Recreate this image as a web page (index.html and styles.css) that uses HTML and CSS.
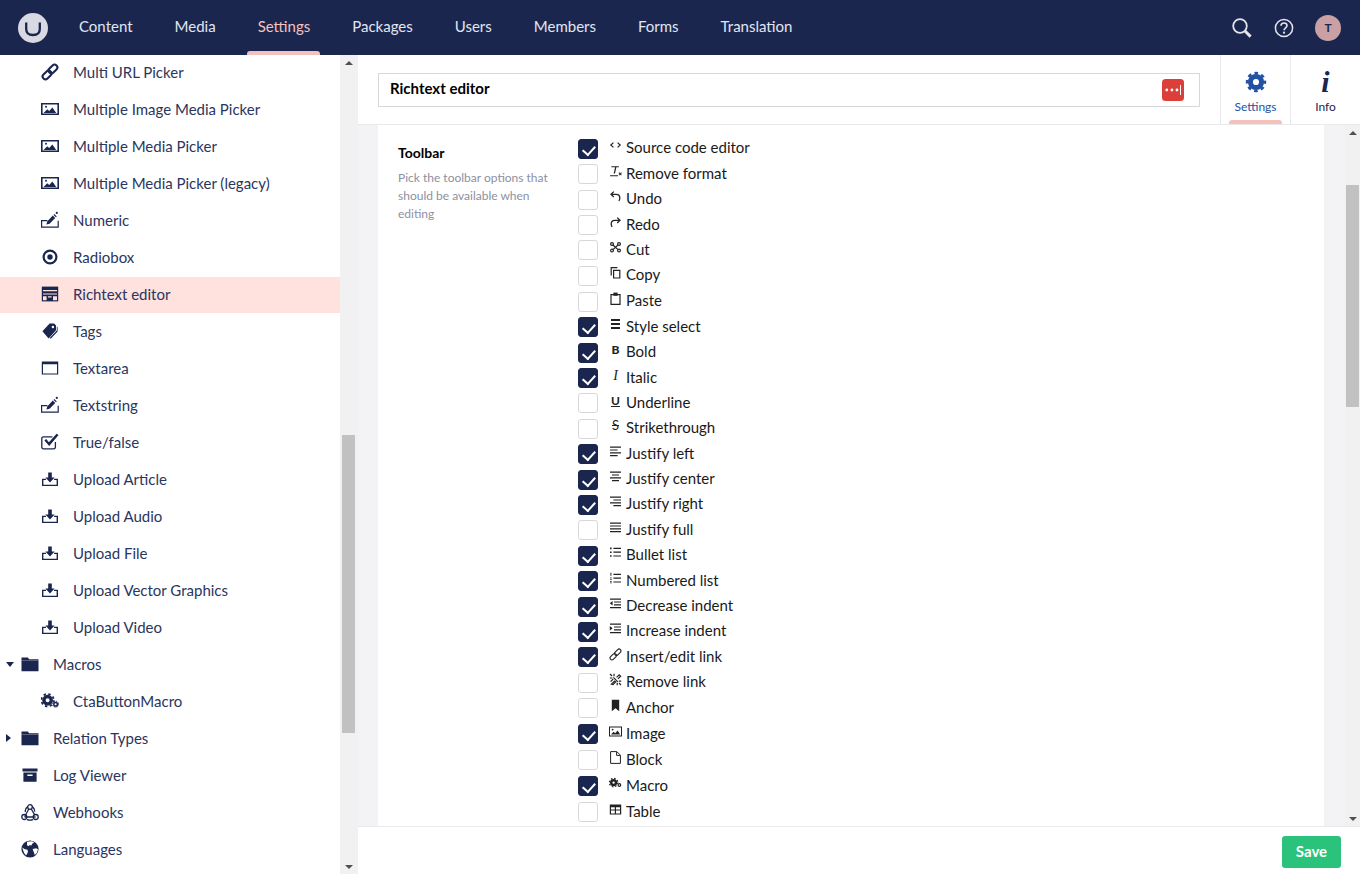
FILE: index.html
```html
<!DOCTYPE html>
<html lang="en">
<head>
  <meta charset="UTF-8" />
  <meta name="viewport" content="width=device-width, initial-scale=1" />
  <title>Richtext editor</title>
  <link rel="stylesheet" href="styles.css">
</head>
<body>

<svg class="sprites" aria-hidden="true">
  <symbol id="i-link" viewBox="0 0 18 18"><g fill="none" stroke="currentColor" stroke-width="2.1" transform="rotate(-45 9 9)"><rect x="-.2" y="6.2" width="10" height="5.6" rx="2.8"/><rect x="8.2" y="6.2" width="10" height="5.6" rx="2.8"/></g></symbol>
  <symbol id="i-image" viewBox="0 0 18 18"><path fill="currentColor" fill-rule="evenodd" d="M0 3h18v12H0zM1.6 4.5v9h14.8v-9z"/><path fill="currentColor" d="M2.6 13l3.6-3.8 2 1.8 3.2-3.6 3.8 5.6z"/><circle cx="5" cy="6.7" r="1" fill="currentColor"/></symbol>
  <symbol id="i-edit" viewBox="0 0 18 18"><path fill="none" stroke="currentColor" stroke-width="1.2" d="M6.4 9.6H.6v6.6h16.6V9.8"/><path fill="currentColor" d="M5.4 13.6l.8-3.2 5.6-5.8 2.4 2.4-5.6 5.8zM12.5 3.9l.9-.9 2.4 2.4-.9.9z"/><circle cx="15.8" cy="1.9" r="1.1" fill="currentColor"/></symbol>
  <symbol id="i-radio" viewBox="0 0 18 18"><circle cx="9" cy="9" r="6.4" fill="none" stroke="currentColor" stroke-width="2.2"/><circle cx="9" cy="9" r="2.7" fill="currentColor"/></symbol>
  <symbol id="i-rte" viewBox="0 0 18 18"><path fill="currentColor" d="M.8 1.6h16.4v14.8H.8z"/><path fill="#ffe1de" d="M2 5h14v1.2H2zM2 8.4h14v1.1H2zM2 11.2h3.6v4H2zM7 11.2h3.6v1.3H7zM12 11.2h4v4h-4z"/></symbol>
  <symbol id="i-tags" viewBox="0 0 18 18"><path fill="currentColor" fill-rule="evenodd" d="M1.4 9.2L8.6 1.6h4.6L15 3.4v4.8L7.6 16.4zM11.9 3.8a1.2 1.2 0 1 0 0 2.4 1.2 1.2 0 0 0 0-2.4z"/><path fill="currentColor" d="M15.8 4.4l.8.8v4.2l-6.8 7.4-1.1-.8 7.1-7.4z"/></symbol>
  <symbol id="i-window" viewBox="0 0 18 18"><path fill="currentColor" fill-rule="evenodd" d="M.8 2.4h16.4v13.2H.8zM2 5.2v9.2h14V5.2z"/></symbol>
  <symbol id="i-true" viewBox="0 0 18 18"><path fill="none" stroke="currentColor" stroke-width="1.3" d="M14.4 9v5.2a1.6 1.6 0 0 1-1.6 1.6H2.4A1.6 1.6 0 0 1 .8 14.2V5.4a1.6 1.6 0 0 1 1.6-1.6h9"/><path fill="currentColor" d="M3.4 7.6L5.2 6l2.7 3.2L15.6.7l2 1.2-9.4 11z"/></symbol>
  <symbol id="i-upload" viewBox="0 0 18 18"><path fill="none" stroke="currentColor" stroke-width="1.4" d="M5 9.4H1.7v6h14.6v-6H13"/><path fill="currentColor" d="M7.2 2.6h3.6v5h2.8L9 12.4 4.4 7.6h2.8z"/></symbol>
  <symbol id="i-folder" viewBox="0 0 18 18"><path fill="currentColor" d="M.5 2.6h6.4l1.2 1.6h9.4v12H.5z"/><path fill="#fff" opacity=".7" d="M.5 5h17v.4H.5z"/></symbol>
  <symbol id="i-gears" viewBox="0 0 18 18"><circle cx="6.6" cy="8.2" r="3.7" fill="none" stroke="currentColor" stroke-width="3.4"/><circle cx="6.6" cy="8.2" r="6.2" fill="none" stroke="currentColor" stroke-width="1.8" stroke-dasharray="2.4 2.47"/><circle cx="14.6" cy="12.2" r="1.8" fill="none" stroke="currentColor" stroke-width="1.5"/><circle cx="14.6" cy="12.2" r="3" fill="none" stroke="currentColor" stroke-width="1" stroke-dasharray="1.3 1.05"/></symbol>
  <symbol id="i-box" viewBox="0 0 18 18"><path fill="currentColor" fill-rule="evenodd" d="M1.5 2.4h15v3.2h-15zM2.4 6.6h13.2v9.2H2.4zM6.4 8.4v1.6h5.2V8.4z"/></symbol>
  <symbol id="i-hooks" viewBox="0 0 18 18"><g fill="none" stroke="currentColor" stroke-width="1.3"><circle cx="9" cy="4" r="2.3"/><circle cx="3.3" cy="14" r="2.5"/><circle cx="14.7" cy="14" r="2.5"/><path d="M7.8 6L3.6 13.8M10.2 6l3.4 5.6M3.6 14h11M6.8 3.6C4.6 5 4 7 4.4 9M11.2 3.6c2 1.4 2.6 3 2.4 5M6 16.6c2 .7 4 .7 6 0"/></g></symbol>
  <symbol id="i-globe" viewBox="0 0 18 18"><circle cx="9" cy="9" r="8.6" fill="currentColor"/><path fill="#fff" d="M6 1.8l5-.6 2.2 1.4-2 1.2-.8 1.6-2-.4-.4 1.2-2-1zM11.6 9l3.6-.8 1.8 1-1 3.6-2.2 2.2-1-2.8zM1.2 7.6L3.4 9l3 .8.6 2-1.2 2.6-1 .8-1.8-2.4z"/></symbol>

  <symbol id="t-code" viewBox="0 0 13 13"><path fill="none" stroke="currentColor" stroke-width="1.2" d="M4.4 3.6L1.8 6l2.6 2.4M8.6 3.6L11.2 6 8.6 8.4"/></symbol>
  <symbol id="t-clear" viewBox="0 0 13 13"><path fill="currentColor" d="M2.4 1.2h7.4v1.1H7.4L6 8.4H4.7l1.4-6.1H2.4zM1 10.2h8v1.1H1zM9.6 8l.7-.7.9.9.9-.9.7.7-.9.9.9.9-.7.7-.9-.9-.9.9-.7-.7.9-.9z"/></symbol>
  <symbol id="t-undo" viewBox="0 0 13 13"><path fill="none" stroke="currentColor" stroke-width="1.3" d="M4.8 1.6L2 4.3l2.8 2.6M2.4 4.3h4.8c2.2 0 3.6 1.6 3.6 3.6 0 1.2-.4 2.2-1 3"/></symbol>
  <symbol id="t-redo" viewBox="0 0 13 13"><path fill="none" stroke="currentColor" stroke-width="1.3" d="M8.2 1.6L11 4.3 8.2 6.9M10.6 4.3H5.8C3.6 4.3 2.2 5.9 2.2 7.9c0 1.2.4 2.2 1 3"/></symbol>
  <symbol id="t-cut" viewBox="0 0 13 13"><g fill="none" stroke="currentColor" stroke-width="1.2"><circle cx="3" cy="3" r="1.4"/><circle cx="10" cy="3" r="1.4"/><circle cx="3" cy="9.6" r="1.4"/><circle cx="10" cy="9.6" r="1.4"/><path d="M4 4l5 4.6M9 4L4 8.6"/></g></symbol>
  <symbol id="t-copy" viewBox="0 0 13 13"><path fill="none" stroke="currentColor" stroke-width="1.2" d="M4.6 4.4h6.2v7.6H4.6zM2.2 9.4V1.6h6.2"/></symbol>
  <symbol id="t-paste" viewBox="0 0 13 13"><path fill="none" stroke="currentColor" stroke-width="1.2" d="M2 2.6h9v9.8H2z"/><path fill="currentColor" d="M4.4.6h4.2v3.2H4.4z"/></symbol>
  <symbol id="t-style" viewBox="0 0 13 13"><path fill="currentColor" d="M2 1h9v2H2zM2 5h9v2H2zM2 9h9v2H2z"/></symbol>
  <symbol id="t-left" viewBox="0 0 13 13"><path fill="currentColor" d="M1 1.6h11v1.2H1zM1 4.4h7.6v1.2H1zM1 7.2h11v1.2H1zM1 10h7.6v1.2H1z"/></symbol>
  <symbol id="t-center" viewBox="0 0 13 13"><path fill="currentColor" d="M1 1.6h11v1.2H1zM3 4.4h7v1.2H3zM1 7.2h11v1.2H1zM3 10h7v1.2H3z"/></symbol>
  <symbol id="t-right" viewBox="0 0 13 13"><path fill="currentColor" d="M1 1.6h11v1.2H1zM4.4 4.4H12v1.2H4.4zM1 7.2h11v1.2H1zM4.4 10H12v1.2H4.4z"/></symbol>
  <symbol id="t-full" viewBox="0 0 13 13"><path fill="currentColor" d="M1 1.6h11v1.2H1zM1 4.4h11v1.2H1zM1 7.2h11v1.2H1zM1 10h11v1.2H1z"/></symbol>
  <symbol id="t-bullet" viewBox="0 0 13 13"><path fill="currentColor" d="M1 1.6h1.6v1.6H1zM1 5.4h1.6V7H1zM1 9.2h1.6v1.6H1zM4.4 1.8H12V3H4.4zM4.4 5.6H12v1.2H4.4zM4.4 9.4H12v1.2H4.4z"/></symbol>
  <symbol id="t-number" viewBox="0 0 13 13"><path fill="currentColor" d="M1.4.8h1v3h-1zM1 5.4h1.8v.8H1zM1 7h1.8v.8H1zM1 9.2h1.8v.7H1zM1 10.6h1.8v.7H1zM4.4 1.8H12V3H4.4zM4.4 5.6H12v1.2H4.4zM4.4 9.4H12v1.2H4.4z"/></symbol>
  <symbol id="t-outdent" viewBox="0 0 13 13"><path fill="currentColor" d="M1 1.6h11v1.2H1zM5 4.4h7v1.2H5zM5 7.2h7v1.2H5zM1 10h11v1.2H1zM3.6 4v4.6L.8 6.3z"/></symbol>
  <symbol id="t-indent" viewBox="0 0 13 13"><path fill="currentColor" d="M1 1.6h11v1.2H1zM5 4.4h7v1.2H5zM5 7.2h7v1.2H5zM1 10h11v1.2H1zM.8 4v4.6l2.8-2.3z"/></symbol>
  <symbol id="t-link" viewBox="0 0 13 13"><g fill="none" stroke="currentColor" stroke-width="1.1" transform="rotate(-45 6.5 6.5)"><rect x="-.4" y="4.6" width="7.4" height="3.8" rx="1.9"/><rect x="6" y="4.6" width="7.4" height="3.8" rx="1.9"/></g></symbol>
  <symbol id="t-unlink" viewBox="0 0 13 13"><g fill="none" stroke="currentColor" stroke-width="1.2"><path d="M1.6 8.6l2.6-2.6M2.4 11.2l3.2-3.2 1 1-2.6 2.6zM4.4 4.4l4.4 4.4M7.6 4.4l2.6-2.6 1.4 1.4L9 5.8M1 1l2 2M5 .8v2.4M.8 5h2.4M12 12l-2-2M8.2 12.2V9.8M12.2 8.2H9.8"/></g></symbol>
  <symbol id="t-anchor" viewBox="0 0 13 13"><path fill="currentColor" d="M2.8.8h7.4v11.4L6.5 9.2l-3.7 3z"/></symbol>
  <symbol id="t-image" viewBox="0 0 13 13"><path fill="currentColor" fill-rule="evenodd" d="M0 1.6h13v9.8H0zM1 2.6v7.8h11V2.6z"/><path fill="currentColor" d="M2 9.6l2.6-2.8 1.6 1.4 2.4-2.8 2.6 4.2z"/><circle cx="3.6" cy="4.6" r=".9" fill="currentColor"/></symbol>
  <symbol id="t-block" viewBox="0 0 13 13"><path fill="none" stroke="currentColor" stroke-width="1" d="M1.6.6h6.2l3.6 3.6v8.2H1.6zM7.6.8v3.6h3.6"/></symbol>
  <symbol id="t-macro" viewBox="0 0 13 13"><circle cx="4.6" cy="5.6" r="2.4" fill="none" stroke="currentColor" stroke-width="2.4"/><circle cx="4.6" cy="5.6" r="4.2" fill="none" stroke="currentColor" stroke-width="1.2" stroke-dasharray="1.6 1.7"/><circle cx="10.4" cy="8" r="1.3" fill="none" stroke="currentColor" stroke-width="1.2"/></symbol>
  <symbol id="t-table" viewBox="0 0 13 13"><path fill="currentColor" fill-rule="evenodd" d="M.8 1.4h11.4v10.2H.8zM2 4.2v2.2h3.8V4.2zM7 4.2v2.2h4V4.2zM2 7.4v3h3.8v-3zM7 7.4v3h4v-3z"/></symbol>
</svg>

<header class="topbar">
  <div class="logo"><svg viewBox="0 0 30 30" width="30" height="30"><circle cx="15" cy="15" r="15" fill="#d8d9e2"/><path d="M8.2 9.6v6.4c0 4.6 2.4 6 6.8 6s6.8-1.4 6.8-6V9.6" fill="none" stroke="#1b264f" stroke-width="2.3"/></svg></div>
  <nav class="mainnav">
    <a class="nav-item">Content</a>
    <a class="nav-item">Media</a>
    <a class="nav-item active">Settings</a>
    <a class="nav-item">Packages</a>
    <a class="nav-item">Users</a>
    <a class="nav-item">Members</a>
    <a class="nav-item">Forms</a>
    <a class="nav-item">Translation</a>
  </nav>
  <div class="top-tools">
    <svg viewBox="0 0 22 22" width="22" height="22"><circle cx="9" cy="9" r="6.8" fill="none" stroke="#e4e4ea" stroke-width="1.8"/><path d="M14 14l5.6 5.6" stroke="#e4e4ea" stroke-width="3"/></svg>
    <svg viewBox="0 0 20 20" width="20" height="20"><circle cx="10" cy="10" r="8.6" fill="none" stroke="#e4e4ea" stroke-width="1.5"/><path d="M7 7.8c0-1.8 1.4-2.8 3-2.8s3 1 3 2.6c0 2.4-3 2.4-3 4.6" fill="none" stroke="#e4e4ea" stroke-width="1.6"/><circle cx="10" cy="14.7" r="1.1" fill="#e4e4ea"/></svg>
    <div class="avatar">T</div>
  </div>
</header>

<div class="main">
  <aside class="sidebar">
    <ul class="tree">
      <li class="tree-row child"><svg class="tree-icon"><use href="#i-link"/></svg>Multi URL Picker</li>
      <li class="tree-row child"><svg class="tree-icon"><use href="#i-image"/></svg>Multiple Image Media Picker</li>
      <li class="tree-row child"><svg class="tree-icon"><use href="#i-image"/></svg>Multiple Media Picker</li>
      <li class="tree-row child"><svg class="tree-icon"><use href="#i-image"/></svg>Multiple Media Picker (legacy)</li>
      <li class="tree-row child"><svg class="tree-icon"><use href="#i-edit"/></svg>Numeric</li>
      <li class="tree-row child"><svg class="tree-icon"><use href="#i-radio"/></svg>Radiobox</li>
      <li class="tree-row child current"><svg class="tree-icon"><use href="#i-rte"/></svg>Richtext editor</li>
      <li class="tree-row child"><svg class="tree-icon"><use href="#i-tags"/></svg>Tags</li>
      <li class="tree-row child"><svg class="tree-icon"><use href="#i-window"/></svg>Textarea</li>
      <li class="tree-row child"><svg class="tree-icon"><use href="#i-edit"/></svg>Textstring</li>
      <li class="tree-row child"><svg class="tree-icon"><use href="#i-true"/></svg>True/false</li>
      <li class="tree-row child"><svg class="tree-icon"><use href="#i-upload"/></svg>Upload Article</li>
      <li class="tree-row child"><svg class="tree-icon"><use href="#i-upload"/></svg>Upload Audio</li>
      <li class="tree-row child"><svg class="tree-icon"><use href="#i-upload"/></svg>Upload File</li>
      <li class="tree-row child"><svg class="tree-icon"><use href="#i-upload"/></svg>Upload Vector Graphics</li>
      <li class="tree-row child"><svg class="tree-icon"><use href="#i-upload"/></svg>Upload Video</li>
      <li class="tree-row"><span class="caret down"></span><svg class="tree-icon"><use href="#i-folder"/></svg>Macros</li>
      <li class="tree-row child"><svg class="tree-icon"><use href="#i-gears"/></svg>CtaButtonMacro</li>
      <li class="tree-row"><span class="caret right"></span><svg class="tree-icon"><use href="#i-folder"/></svg>Relation Types</li>
      <li class="tree-row"><span class="caret none"></span><svg class="tree-icon"><use href="#i-box"/></svg>Log Viewer</li>
      <li class="tree-row"><span class="caret none"></span><svg class="tree-icon"><use href="#i-hooks"/></svg>Webhooks</li>
      <li class="tree-row"><span class="caret none"></span><svg class="tree-icon"><use href="#i-globe"/></svg>Languages</li>
    </ul>
    <div class="scrollbar side-scroll">
      <span class="arrow up"></span>
      <span class="thumb"></span>
      <span class="arrow dn"></span>
    </div>
  </aside>

  <section class="editor">
    <div class="editor-head">
      <div class="name-field">
        <span class="name-text">Richtext editor</span>
        <svg class="lock" viewBox="0 0 22 22" width="22" height="22"><rect width="22" height="22" rx="3.5" fill="#dc3f39"/><g fill="#fff"><circle cx="4.8" cy="11" r="1.4"/><circle cx="9.9" cy="11" r="1.4"/><circle cx="15" cy="11" r="1.4"/><rect x="18" y="6" width="1" height="10"/></g></svg>
      </div>
      <div class="app-tab active">
        <svg viewBox="0 0 22 22" width="22" height="22"><circle cx="11" cy="11" r="5.6" fill="none" stroke="#2152a3" stroke-width="5"/><circle cx="11" cy="11" r="8.9" fill="none" stroke="#2152a3" stroke-width="2.6" stroke-dasharray="3.6 3.39" stroke-dashoffset="1.8"/></svg>
        <span>Settings</span>
      </div>
      <div class="app-tab">
        <span class="info-i">i</span>
        <span>Info</span>
      </div>
    </div>

    <div class="editor-body">
      <div class="card">
        <div class="prop-label">
          <h4>Toolbar</h4>
          <p>Pick the toolbar options that should be available when editing</p>
        </div>
        <ul class="opts">
          <li class="opt"><span class="cb on"></span><svg class="opt-icon"><use href="#t-code"/></svg>Source code editor</li>
          <li class="opt"><span class="cb"></span><svg class="opt-icon"><use href="#t-clear"/></svg>Remove format</li>
          <li class="opt"><span class="cb"></span><svg class="opt-icon"><use href="#t-undo"/></svg>Undo</li>
          <li class="opt"><span class="cb"></span><svg class="opt-icon"><use href="#t-redo"/></svg>Redo</li>
          <li class="opt"><span class="cb"></span><svg class="opt-icon"><use href="#t-cut"/></svg>Cut</li>
          <li class="opt"><span class="cb"></span><svg class="opt-icon"><use href="#t-copy"/></svg>Copy</li>
          <li class="opt tall"><span class="cb"></span><svg class="opt-icon"><use href="#t-paste"/></svg>Paste</li>
          <li class="opt"><span class="cb on"></span><svg class="opt-icon"><use href="#t-style"/></svg>Style select</li>
          <li class="opt"><span class="cb on"></span><span class="opt-glyph bold">B</span>Bold</li>
          <li class="opt"><span class="cb on"></span><span class="opt-glyph ital">I</span>Italic</li>
          <li class="opt"><span class="cb"></span><span class="opt-glyph under">U</span>Underline</li>
          <li class="opt"><span class="cb"></span><span class="opt-glyph strike">S</span>Strikethrough</li>
          <li class="opt"><span class="cb on"></span><svg class="opt-icon"><use href="#t-left"/></svg>Justify left</li>
          <li class="opt"><span class="cb on"></span><svg class="opt-icon"><use href="#t-center"/></svg>Justify center</li>
          <li class="opt"><span class="cb on"></span><svg class="opt-icon"><use href="#t-right"/></svg>Justify right</li>
          <li class="opt"><span class="cb"></span><svg class="opt-icon"><use href="#t-full"/></svg>Justify full</li>
          <li class="opt"><span class="cb on"></span><svg class="opt-icon"><use href="#t-bullet"/></svg>Bullet list</li>
          <li class="opt"><span class="cb on"></span><svg class="opt-icon"><use href="#t-number"/></svg>Numbered list</li>
          <li class="opt"><span class="cb on"></span><svg class="opt-icon"><use href="#t-outdent"/></svg>Decrease indent</li>
          <li class="opt"><span class="cb on"></span><svg class="opt-icon"><use href="#t-indent"/></svg>Increase indent</li>
          <li class="opt"><span class="cb on"></span><svg class="opt-icon"><use href="#t-link"/></svg>Insert/edit link</li>
          <li class="opt"><span class="cb"></span><svg class="opt-icon"><use href="#t-unlink"/></svg>Remove link</li>
          <li class="opt tall"><span class="cb"></span><svg class="opt-icon"><use href="#t-anchor"/></svg>Anchor</li>
          <li class="opt tall"><span class="cb on"></span><svg class="opt-icon"><use href="#t-image"/></svg>Image</li>
          <li class="opt tall"><span class="cb"></span><svg class="opt-icon"><use href="#t-block"/></svg>Block</li>
          <li class="opt tall"><span class="cb on"></span><svg class="opt-icon"><use href="#t-macro"/></svg>Macro</li>
          <li class="opt"><span class="cb"></span><svg class="opt-icon"><use href="#t-table"/></svg>Table</li>
        </ul>
      </div>
      <div class="scrollbar body-scroll">
        <span class="arrow up"></span>
        <span class="thumb"></span>
        <span class="arrow dn"></span>
      </div>
    </div>

    <footer class="editor-foot">
      <button class="save-btn">Save</button>
    </footer>
  </section>
</div>

</body>
</html>
```

FILE: styles.css
```css
* { box-sizing: border-box; }
html, body { margin: 0; height: 100%; overflow: hidden; }
body { font-family: Lato, "Open Sans", sans-serif; font-size: 15px; color: #1b264f; background: #fff; display: flex; flex-direction: column; height: 874px; }
ul { list-style: none; margin: 0; padding: 0; }
.sprites { display: none; }

/* top bar */
.topbar { height: 55px; flex: none; background: #1b264f; display: flex; align-items: center; }
.logo { width: 30px; height: 30px; margin-left: 18px; margin-top: 1px; flex: none; }
.mainnav { display: flex; height: 55px; margin-left: 10px; }
.nav-item { position: relative; display: flex; align-items: center; padding: 0 21px 3px; color: #e0e6f2; font-size: 15px; }
.nav-item.active { color: #f5c1bc; }
.nav-item.active::after { content: ""; position: absolute; left: 10px; right: 11px; bottom: 0; height: 4px; background: #f5c1bc; border-radius: 3px 3px 0 0; }
.top-tools { margin-left: auto; margin-right: 19px; display: flex; align-items: center; gap: 21px; }
.avatar { width: 26px; height: 26px; border-radius: 50%; background: #c9a0a3; color: #1b264f; font-size: 12px; font-weight: 700; display: flex; align-items: center; justify-content: center; }

.main { flex: 1; display: flex; min-height: 0; }

/* sidebar tree */
.sidebar { width: 358px; flex: none; display: flex; }
.tree { width: 340px; flex: none; overflow: hidden; }
.tree-row { height: 36px; margin-bottom: 1px; display: flex; align-items: center; padding: 0 0 2px 21px; white-space: nowrap; color: #2b3560; }
.tree-row.child { padding-left: 41px; }
.tree-row.current { background: #ffe1de; }
.tree-row .caret { width: 0; height: 0; margin-left: -15px; margin-right: 7px; flex: none; }
.tree-icon { width: 18px; height: 18px; margin-right: 14px; flex: none; color: #1b264f; }
.caret { display: inline-block; border-style: solid; border-color: transparent; }
.caret.down { border-width: 5px 4px 0 4px; border-top-color: #1b264f; }
.caret.right { border-width: 4px 0 4px 5px; border-left-color: #1b264f; margin-right: 10px; }
.caret.none { border-width: 0; margin-left: 0; margin-right: 0; }

/* scrollbars */
.scrollbar { position: relative; background: #f1f1f1; flex: none; display: flex; flex-direction: column; align-items: flex-start; }
.side-scroll { width: 18px; }
.body-scroll { width: 15px; }
.thumb { display: block; background: #c1c1c1; width: 13px; }
.side-scroll .thumb { height: 298px; margin: 380px 0 0 2px; }
.body-scroll .thumb { height: 222px; margin: 60px 0 0 1px; }
.arrow { position: absolute; width: 0; height: 0; border-style: solid; border-color: transparent; border-width: 4px; }
.side-scroll .arrow { left: 5px; }
.body-scroll .arrow { left: 4px; }
.arrow.up { top: 6px; border-top-width: 0; border-bottom: 4px solid #505050; }
.arrow.dn { bottom: 5px; border-bottom-width: 0; border-top: 4px solid #505050; }

/* editor */
.editor { flex: 1; min-width: 0; display: flex; flex-direction: column; }
.editor-head { height: 70px; flex: none; display: flex; border-bottom: 1px solid #e9e9eb; }
.name-field { width: 822px; height: 34px; margin: 18px 20px 0; border: 1px solid #d8d7d9; display: flex; align-items: center; justify-content: space-between; padding: 0 15px 0 11px; }
.name-text { font-weight: 700; font-size: 15px; color: #000; margin-top: -4px; }
.app-tab { position: relative; width: 70px; border-left: 1px solid #e9e9eb; display: flex; flex-direction: column; align-items: center; padding-top: 16px; font-size: 12px; color: #1b264f; }
.app-tab svg { display: block; }
.app-tab span:last-child { margin-top: 6px; line-height: 15px; }
.app-tab.active { color: #2152a3; }
.app-tab.active::after { content: ""; position: absolute; left: 8px; right: 8px; bottom: 0; height: 4px; background: #f5c1bc; border-radius: 3px 3px 0 0; }
.info-i { font-family: "Liberation Serif", serif; font-weight: 700; font-style: italic; font-size: 30px; line-height: 22px; height: 22px; color: #1b264f; }

.editor-body { flex: 1; min-height: 0; display: flex; background: #f3f3f5; padding-left: 20px; }
.card { width: 946px; margin-right: 21px; background: #fff; display: flex; padding: 9.7px 0 0 20px; overflow: hidden; }
.prop-label { width: 180px; flex: none; }
.prop-label h4 { margin: 9.3px 0 8px; font-size: 14px; line-height: 17px; font-weight: 700; color: #000; }
.prop-label p { margin: 0; font-size: 12px; line-height: 18px; color: #8d90a0; width: 160px; }

.opts { flex: 1; }
.opt { height: 25.4px; display: flex; align-items: center; color: #1a1a1a; font-size: 15px; white-space: nowrap; }
.opt.tall { height: 26px; }
.cb { width: 20px; height: 20px; flex: none; margin: 3px 11px 0 0; border: 1px solid #d8d7d9; border-radius: 3px; background: #fff; position: relative; }
.cb.on { background: #1b264f; border-color: #1b264f; }
.cb.on::after { content: ""; position: absolute; left: 6px; top: 3px; width: 5.5px; height: 10px; border: solid #fff; border-width: 0 2.6px 2.6px 0; transform: rotate(42deg); }
.opt-icon { width: 13px; height: 13px; flex: none; margin: -3px 4px 0 0; color: #222; }
.opt-glyph { width: 13px; flex: none; margin: -3px 4px 0 0; font-size: 12px; line-height: 13px; text-align: center; color: #222; }
.opt-glyph.bold { font-weight: 900; }
.opt-glyph.ital { font-family: "Liberation Serif", serif; font-style: italic; font-size: 14px; }
.opt-glyph.under { text-decoration: underline; font-weight: 700; }
.opt-glyph.strike { text-decoration: line-through; font-size: 13px; }

.editor-foot { height: 48px; flex: none; border-top: 1px solid #e9e9eb; display: flex; justify-content: flex-end; align-items: flex-start; padding: 9px 19px 0 0; }
.save-btn { width: 59px; height: 32px; border: 0; border-radius: 3px; background: #2bc37c; color: #fff; font-family: inherit; font-size: 15px; font-weight: 700; padding: 0 0 3px; cursor: pointer; }
```
